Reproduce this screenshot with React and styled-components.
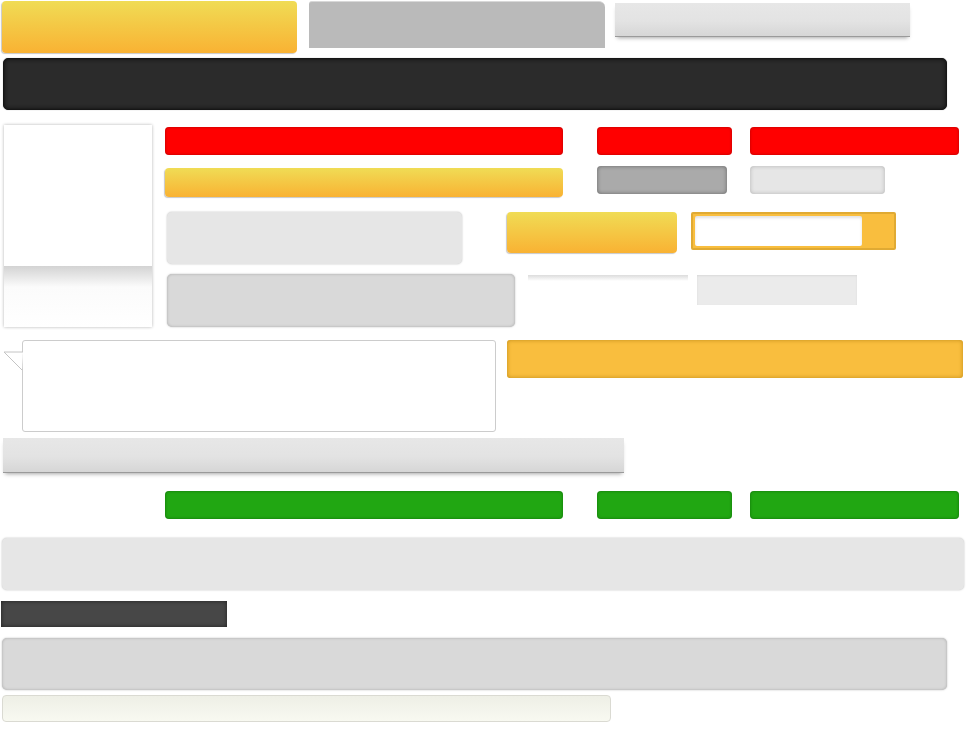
import React from "react";
import styled, { createGlobalStyle, css } from "styled-components";

const Global = createGlobalStyle`
  html, body { margin: 0; padding: 0; background: #fff; }
  body { font-family: "Liberation Sans", Arial, sans-serif; }
`;

const Page = styled.div`
  width: 970px;
  display: flex;
  flex-direction: column;
  align-items: flex-start;
`;

const Row = styled.div`
  display: flex;
  align-items: flex-start;
  margin-top: ${(p) => p.$top || 0}px;
  padding-left: ${(p) => p.$left || 0}px;
`;

const Block = styled.div`
  flex: none;
  width: ${(p) => p.$w}px;
  height: ${(p) => p.$h}px;
  margin-left: ${(p) => p.$ml || 0}px;
  margin-top: ${(p) => p.$mt || 0}px;
  box-sizing: border-box;
`;

const YellowBtn = styled(Block)`
  background: linear-gradient(#f0dc55, #f9b233);
  border-radius: 4px;
  box-shadow: -1px 1px 1px rgba(0, 0, 0, 0.22);
`;

const GreyTab = styled(Block)`
  background: #bababa;
  border-top: 1px solid #d8d8d8;
  border-radius: 3px 6px 0 0;
`;

const ShelfBar = styled(Block)`
  background: linear-gradient(#e7e7e7 0%, #e3e3e3 55%, #d6d6d6 100%);
  border-bottom: 1px solid #9a9a9a;
  box-shadow: 0 3px 4px -2px rgba(0, 0, 0, 0.35);
`;

const DarkBar = styled(Block)`
  background: #2b2b2b;
  border: 1px solid #161616;
  border-radius: 5px;
  box-shadow: inset 0 0 4px #0c0c0c, 0 0 1px rgba(0, 0, 0, 0.4);
`;

const WhitePanel = styled(Block)`
  background: linear-gradient(
    to bottom,
    #fff 0,
    #fff 141px,
    #d3d3d3 141px,
    #fbfbfb 162px,
    #fff 100%
  );
  box-shadow: 0 0 3px rgba(0, 0, 0, 0.3);
`;

const Column = styled.div`
  display: flex;
  flex-direction: column;
  margin-left: ${(p) => p.$ml || 0}px;
  margin-top: ${(p) => p.$mt || 0}px;
`;

const tones = {
  red: { bg: "#ff0000", edge: "rgba(110, 0, 0, 0.55)" },
  green: { bg: "#21a712", edge: "rgba(0, 60, 0, 0.55)" },
};

const ColorBtn = styled(Block)`
  background: ${(p) => tones[p.$tone].bg};
  border-radius: 4px;
  box-shadow: inset 0 0 3px ${(p) => tones[p.$tone].edge};
`;

const SoftBtn = styled(Block)`
  background: ${(p) => (p.$dark ? "#aaaaaa" : "#e6e6e6")};
  border-radius: 4px;
  box-shadow: inset 0 0 4px
    ${(p) => (p.$dark ? "rgba(0,0,0,0.4)" : "rgba(0,0,0,0.22)")};
`;

const Card = styled(Block)`
  background: ${(p) => p.$bg || "#e6e6e6"};
  border-radius: 5px;
  ${(p) =>
    p.$inset
      ? css`
          box-shadow: inset 0 0 3px rgba(0, 0, 0, 0.22), 0 0 2px rgba(0, 0, 0, 0.25);
        `
      : css`
          box-shadow: 0 0 2px rgba(0, 0, 0, 0.28);
        `}
`;

const SearchBox = styled(Block)`
  background: #f9be3e;
  border: 2px solid #e0aa33;
  border-radius: 2px;
  padding: 2px 0 0 2px;
`;

const SearchInput = styled.div`
  width: 167px;
  height: 30px;
  background: #fff;
  border-radius: 2px;
  box-shadow: inset 0 2px 3px rgba(0, 0, 0, 0.12);
`;

const FadeLine = styled(Block)`
  background: linear-gradient(#dcdcdc, #fff);
`;

const PaleBox = styled(Block)`
  background: #ebebeb;
  box-shadow: inset 0 1px 2px rgba(0, 0, 0, 0.08);
`;

const BubbleWrap = styled.div`
  position: relative;
  flex: none;
  margin-left: 22px;
`;

const Bubble = styled.div`
  width: 474px;
  height: 92px;
  box-sizing: border-box;
  background: #fff;
  border: 1px solid #cccccc;
  border-radius: 3px;
`;

const Tail = styled.svg`
  position: absolute;
  left: -19px;
  top: 11px;
`;

const AmberBar = styled(Block)`
  background: #f9be3e;
  border-radius: 3px;
  box-shadow: inset 0 0 4px rgba(170, 120, 10, 0.7);
`;

const CharcoalBox = styled(Block)`
  background: #474747;
  box-shadow: inset 0 0 4px rgba(0, 0, 0, 0.55);
`;

const CreamBar = styled(Block)`
  background: linear-gradient(#eeefe6, #f8f9f1);
  border: 1px solid #dadad2;
  border-radius: 4px;
`;

function ButtonTriple({ tone }) {
  return (
    <>
      <ColorBtn $tone={tone} $w={398} $h={28} />
      <ColorBtn $tone={tone} $w={135} $h={28} $ml={34} />
      <ColorBtn $tone={tone} $w={209} $h={28} $ml={18} />
    </>
  );
}

export default function App() {
  return (
    <>
      <Global />
      <Page>
        <Row $top={1}>
          <YellowBtn $w={295} $h={52} $ml={2} />
          <GreyTab $w={296} $h={47} $ml={12} />
          <ShelfBar $w={295} $h={34} $ml={10} $mt={2} />
        </Row>

        <Row $top={5}>
          <DarkBar $w={944} $h={52} $ml={3} />
        </Row>

        <Row $top={15}>
          <WhitePanel $w={148} $h={202} $ml={4} />
          <Column $ml={13} $mt={2}>
            <Row>
              <ButtonTriple tone="red" />
            </Row>
            <Row $top={11}>
              <YellowBtn $w={398} $h={29} $mt={2} />
              <SoftBtn $dark $w={130} $h={28} $ml={34} />
              <SoftBtn $w={135} $h={28} $ml={23} />
            </Row>
            <Row $top={15}>
              <Card $w={295} $h={52} $ml={2} />
              <YellowBtn $w={170} $h={41} $ml={45} />
              <SearchBox $w={205} $h={38} $ml={14}>
                <SearchInput />
              </SearchBox>
            </Row>
            <Row $top={10}>
              <Card $inset $bg="#d9d9d9" $w={348} $h={53} $ml={2} />
              <FadeLine $w={160} $h={6} $ml={13} $mt={1} />
              <PaleBox $w={160} $h={30} $ml={9} $mt={1} />
            </Row>
          </Column>
        </Row>

        <Row $top={13}>
          <BubbleWrap>
            <Bubble />
            <Tail width="20" height="20" viewBox="0 0 20 20">
              <path d="M20 1 L1 1 L19 19" fill="#fff" stroke="#c4c4c4" strokeWidth="1" />
            </Tail>
          </BubbleWrap>
          <AmberBar $w={456} $h={38} $ml={11} />
        </Row>

        <Row $top={6}>
          <ShelfBar $w={621} $h={35} $ml={3} />
        </Row>

        <Row $top={18} $left={165}>
          <ButtonTriple tone="green" />
        </Row>

        <Row $top={19}>
          <Card $w={962} $h={52} $ml={2} />
        </Row>

        <Row $top={11}>
          <CharcoalBox $w={226} $h={26} $ml={1} />
        </Row>

        <Row $top={11}>
          <Card $inset $bg="#d9d9d9" $w={945} $h={52} $ml={2} />
        </Row>

        <Row $top={5}>
          <CreamBar $w={609} $h={27} $ml={2} />
        </Row>
      </Page>
    </>
  );
}
